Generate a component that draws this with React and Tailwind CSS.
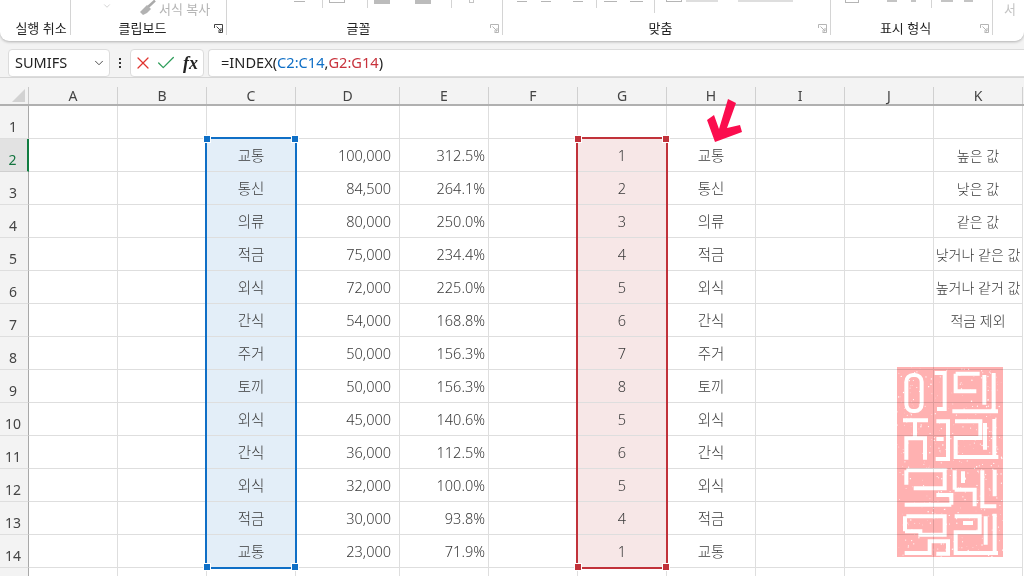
import React from "react";
import { ChevronDown, X, Check } from "lucide-react";

const columns = ["A", "B", "C", "D", "E", "F", "G", "H", "I", "J", "K"];

const rows = [
  ["교통", "100,000", "312.5%", "1", "높은 값"],
  ["통신", "84,500", "264.1%", "2", "낮은 값"],
  ["의류", "80,000", "250.0%", "3", "같은 값"],
  ["적금", "75,000", "234.4%", "4", "낮거나 같은 값"],
  ["외식", "72,000", "225.0%", "5", "높거나 같거 값"],
  ["간식", "54,000", "168.8%", "6", "적금 제외"],
  ["주거", "50,000", "156.3%", "7", ""],
  ["토끼", "50,000", "156.3%", "8", ""],
  ["외식", "45,000", "140.6%", "5", ""],
  ["간식", "36,000", "112.5%", "6", ""],
  ["외식", "32,000", "100.0%", "5", ""],
  ["적금", "30,000", "93.8%", "4", ""],
  ["교통", "23,000", "71.9%", "1", ""],
];

const gridCols = "grid grid-cols-[29px_89px_89px_89px_104px_89px_89px_89px_89px_89px_89px_89px_1px]";
const cell = "h-[33px] pt-[1px] border-r border-b border-[#dedede] flex items-center text-[14.5px] font-light text-[#3a3a3a]";

// speckle for the seal, fixed seed so it draws the same every time
function speckle(count) {
  let seed = 17;
  const next = () => {
    seed = (seed * 16807) % 2147483647;
    return seed / 2147483647;
  };
  const dots = [];
  for (let i = 0; i < count; i++) {
    dots.push({ x: 52 + next() * 318, y: 52 + next() * 570, r: 0.7 + next() * 1.5 });
  }
  return dots;
}

function Launcher({ faded }) {
  return (
    <svg width="9" height="9" viewBox="0 0 9 9" fill="none" stroke={faded ? "#b5b5b5" : "#444"} strokeWidth="1">
      <path d="M0.5 4V0.5H8.5V8.5H4.5" />
      <path d="M2.5 2.5L7 7M7 4V7H4" />
    </svg>
  );
}

function Group({ width, children, label, launcher, faded, shift = "pr-[12px]" }) {
  return (
    <div className={`${width} h-[35px] shrink-0 border-r border-[#d4d4d4] flex flex-col`}>
      <div className="h-[23px] flex items-start overflow-hidden">{children}</div>
      <div className={`relative flex-1 flex items-start justify-center pt-[2px] ${shift} text-[13px] leading-[13px] text-[#222] whitespace-nowrap`}>
        {label}
        {launcher && (
          <span className="absolute right-[3px] top-[4px] flex">
            <Launcher faded={faded} />
          </span>
        )}
      </div>
    </div>
  );
}

function Ribbon() {
  return (
    <div className="h-[41px] bg-white rounded-b-[9px] shadow-[0_1px_3px_rgba(0,0,0,0.28)] flex pl-0 overflow-hidden">
      <Group width="w-[71px]" label="실행 취소" shift="pl-[12px]" />
      <Group width="w-[156px]" label="클립보드" launcher>
        <div className="flex items-start">
          <ChevronDown size={10} strokeWidth={1.5} className="ml-[31px] mt-[1px] text-[#b9b9b9]" />
          <svg width="17" height="16" viewBox="0 0 17 16" className="ml-[27px]">
            <path d="M16 0.5L9 7" stroke="#aaa" strokeWidth="2.4" />
            <path d="M8 5L12 9L8 13L4 15L1 12L3 10L5 8Z" fill="#b2b2b2" />
          </svg>
          <span className="ml-[3px] mt-[1px] text-[13px] leading-[17px] text-[#b5b5b5]">서식 복사</span>
        </div>
      </Group>
      <Group width="w-[276px]" label="글꼴" launcher faded>
        <div className="flex items-start">
          <div className="ml-[67px] mt-[1px] w-[11px] h-px bg-[#b5b5b5]" />
          <div className="ml-[17px] h-[8px] w-px bg-[#d4d4d4]" />
          <div className="ml-[6px] w-[16px] h-[3px] border-b border-x border-[#b5b5b5]" />
          <div className="ml-[22px] h-[8px] w-px bg-[#d4d4d4]" />
          <div className="ml-[6px] w-[16px] h-[4px] bg-[#bcbcbc]" />
          <div className="ml-[25px] w-[16px] h-[4px] bg-[#bcbcbc]" />
          <div className="ml-[20px] h-[8px] w-px bg-[#d4d4d4]" />
          <div className="ml-[17px] w-[5px] h-[3px] border-b border-x border-[#c4c4c4]" />
        </div>
      </Group>
      <Group width="w-[328px]" label="맞춤" launcher faded>
        <div className="flex items-start">
          <div className="ml-[14px] mt-[1px] w-[10px] h-px bg-[#b5b5b5]" />
          <div className="ml-[14px] mt-[1px] w-[10px] h-px bg-[#b5b5b5]" />
          <div className="ml-[22px] mt-[1px] w-[10px] h-px bg-[#b5b5b5]" />
          <div className="ml-[13px] h-[8px] w-px bg-[#d4d4d4]" />
          <div className="ml-[7px] mt-[1px] w-[13px] h-px bg-[#b5b5b5]" />
          <div className="ml-[13px] mt-[1px] w-[13px] h-px bg-[#b5b5b5]" />
          <div className="ml-[11px] h-[13px] w-px bg-[#d4d4d4]" />
          <div className="ml-[11px] w-[16px] h-[2px] border-b border-x border-[#b5b5b5]" />
          <div className="ml-[4px] w-[32px] h-[2px] bg-[#dedede]" />
          <div className="ml-[20px] w-[55px] h-[2px] bg-[#dedede]" />
        </div>
      </Group>
      <Group width="w-[162px]" label="표시 형식" launcher faded>
        <div className="flex items-start">
          <div className="ml-[14px] w-[14px] h-[3px] border-b border-x border-[#b5b5b5]" />
          <div className="ml-[28px] w-[10px] h-[2px] bg-[#c4c4c4]" />
          <div className="ml-[14px] w-[5px] h-[2px] bg-[#c4c4c4]" />
          <div className="ml-[15px] h-[8px] w-px bg-[#d4d4d4]" />
          <div className="ml-[9px] w-[12px] h-[2px] bg-[#c4c4c4]" />
          <div className="ml-[11px] w-[9px] h-[2px] bg-[#c4c4c4]" />
        </div>
      </Group>
      <div className="pl-[11px] text-[13px] leading-[19px] text-[#c4c4c4]">서</div>
    </div>
  );
}

function FormulaBar() {
  return (
    <div className="mt-[8px] h-[28px] flex items-stretch pl-[8px]">
      <div className="w-[102px] bg-white border border-[#dcdcdc] rounded-[4px] flex items-center justify-between pl-[6px] pr-[3px] text-[14.5px] text-[#222]">
        SUMIFS
        <ChevronDown size={14} strokeWidth={1.6} className="text-[#444]" />
      </div>
      <div className="w-[20px] flex flex-col items-center justify-center gap-[2px]">
        <span className="w-[2px] h-[2px] bg-[#333]" />
        <span className="w-[2px] h-[2px] bg-[#333]" />
        <span className="w-[2px] h-[2px] bg-[#333]" />
      </div>
      <div className="w-[74px] bg-white border border-[#dcdcdc] rounded-[4px] flex items-center pl-[2px]">
        <X size={20} strokeWidth={1.5} className="text-[#e0342f]" />
        <Check size={22} strokeWidth={1.4} className="ml-[2px] text-[#2f9e5b]" />
        <span className="ml-[6px] text-[18px] font-bold italic font-['Liberation_Serif',serif] text-[#222]">fx</span>
      </div>
      <div className="ml-[4px] flex-1 bg-white border-y border-l border-[#dcdcdc] rounded-l-[4px] flex items-center pl-[12px] text-[14.6px] text-[#222]">
        =INDEX(
        <span className="text-[#0f6fc6]">C2:C14</span>,
        <span className="text-[#c8323c]">G2:G14</span>)
      </div>
    </div>
  );
}

function Seal() {
  const strokes = [
    "M165 70H195V178H172",
    "M228 72H300M228 72V125H290M218 185H355M342 70V190M314 76V165",
    "M70 212H145M106 212V262M80 330V266H136V330",
    "M170 215H205V328H168M170 268H192",
    "M226 215H302V265H228V322H356M344 208V322M316 220V300",
    "M80 362H195V416H102M80 362V405M75 465H215M170 436H215V465",
    "M225 362V420M225 420H285V470M250 365V400M308 362V470H350M345 360V440",
    "M80 500H195V555H122V545H76M76 500V545M75 610H150V575H205V612H170",
    "M225 500H300V548H228V610H355M345 492V610M318 500V585M250 520H280",
  ];
  return (
    <svg
      className="absolute left-[897px] top-[261px] mix-blend-multiply"
      width="106"
      height="190"
      viewBox="52 52 318 570"
    >
      <rect x="52" y="52" width="318" height="570" fill="#ffb1b1" />
      <rect x="80" y="76" width="46" height="108" rx="20" fill="none" stroke="#fff" strokeWidth="12" />
      {strokes.map((d) => (
        <path key={d} d={d} fill="none" stroke="#fff" strokeWidth="12" />
      ))}
      {speckle(420).map((dot, i) => (
        <circle key={i} cx={dot.x} cy={dot.y} r={dot.r} fill="#fff" />
      ))}
    </svg>
  );
}

function Selection({ left, width, color }) {
  return (
    <div className={`absolute ${left} ${width} top-[31px] h-[432px] border-2 ${color.border}`}>
      <span className={`absolute -left-[4px] -top-[4px] w-[8px] h-[8px] border border-white ${color.bg}`} />
      <span className={`absolute -right-[4px] -top-[4px] w-[8px] h-[8px] border border-white ${color.bg}`} />
      <span className={`absolute -left-[4px] -bottom-[4px] w-[8px] h-[8px] border border-white ${color.bg}`} />
      <span className={`absolute -right-[4px] -bottom-[4px] w-[8px] h-[8px] border border-white ${color.bg}`} />
    </div>
  );
}

function RowHeader({ n, active }) {
  return (
    <div
      className={`h-[33px] flex items-end justify-center pb-[1px] pr-[2px] text-[14px] border-b ${
        active
          ? "bg-[#e2e2e2] text-[#13743f] border-[#cfcfcf] border-r-2 border-r-[#107c41]"
          : "bg-[#f3f3f3] text-[#444] border-[#dedede] border-r border-r-[#a8a8a8]"
      }`}
    >
      {n}
    </div>
  );
}

export default function App() {
  return (
    <div className="w-[1024px] h-[576px] overflow-hidden bg-[#f3f3f3] font-['Noto_Sans','Noto_Sans_CJK_KR',sans-serif]">
      <Ribbon />
      <FormulaBar />
      <div className="border-t border-[#d6d6d6]">
        <div className={`${gridCols} h-[28px] border-b-2 border-[#b0b0b0] items-end`}>
          <div className="h-[17px] border-r border-[#c8c8c8] flex items-end justify-end pr-[3px] pb-[2px]">
            <div className="w-[13px] h-[13px] bg-[#d2d2d2] [clip-path:polygon(100%_0,100%_100%,0_100%)]" />
          </div>
          {columns.map((c) => (
            <div key={c} className="h-[17px] border-r border-[#d0d0d0] flex items-center justify-center text-[14px] leading-none text-[#444]">
              {c}
            </div>
          ))}
          <div />
        </div>
        <div className="relative bg-white">
          <div className={gridCols}>
            <RowHeader n="1" />
            {columns.map((c) => (
              <div key={c} className={cell} />
            ))}
            <div />
            {rows.map((r, i) => (
              <React.Fragment key={i}>
                <RowHeader n={i + 2} active={i === 0} />
                <div className={cell} />
                <div className={cell} />
                <div className={`${cell} justify-center bg-[#e3eef8]`}>{r[0]}</div>
                <div className={`${cell} justify-end pr-[8px]`}>{r[1]}</div>
                <div className={`${cell} justify-end pr-[3px]`}>{r[2]}</div>
                <div className={cell} />
                <div className={`${cell} justify-center bg-[#f7e7e7]`}>{r[3]}</div>
                <div className={`${cell} justify-center`}>{r[0]}</div>
                <div className={cell} />
                <div className={cell} />
                <div className={`${cell} justify-center whitespace-nowrap !text-[14px]`}>{r[4]}</div>
                <div />
              </React.Fragment>
            ))}
            <RowHeader n="" />
            {columns.map((c) => (
              <div key={c} className={cell} />
            ))}
            <div />
          </div>
          <Selection left="left-[205px]" width="w-[92px]" color={{ border: "border-[#0f6fc6]", bg: "bg-[#0f6fc6]" }} />
          <Selection left="left-[576px]" width="w-[92px]" color={{ border: "border-[#c1323a]", bg: "bg-[#c1323a]" }} />
          <Seal />
          <svg className="absolute left-[705px] top-[-9px]" width="40" height="48" viewBox="0 0 40 48">
            <path d="M23 2L31 6L22 31L35 28L37 35L10 45L2 23L9 18L14 32Z" fill="#fb0d4e" />
          </svg>
        </div>
      </div>
    </div>
  );
}
